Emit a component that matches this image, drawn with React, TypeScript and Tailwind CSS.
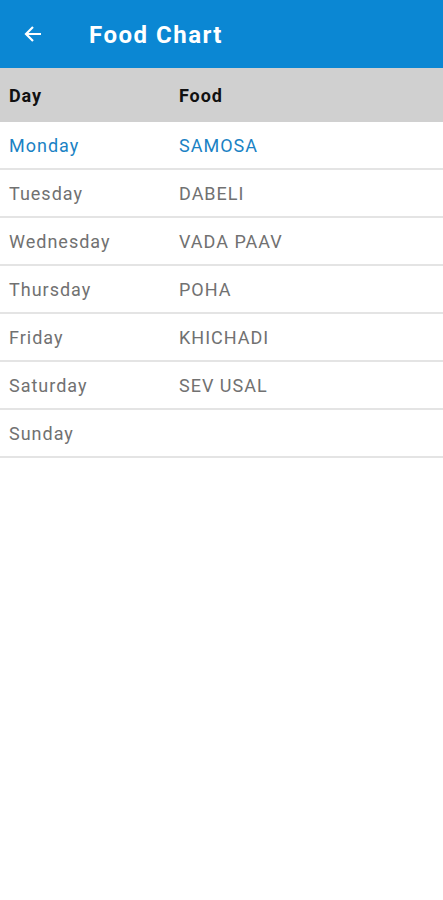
import React from 'react';

const rows = [
  { day: 'Monday', food: 'SAMOSA', active: true },
  { day: 'Tuesday', food: 'DABELI' },
  { day: 'Wednesday', food: 'VADA PAAV' },
  { day: 'Thursday', food: 'POHA' },
  { day: 'Friday', food: 'KHICHADI' },
  { day: 'Saturday', food: 'SEV USAL' },
  { day: 'Sunday', food: '' },
];

const App = () => {
  return (
    <div className="min-h-screen bg-white font-['Roboto',sans-serif]">
      <header className="h-[68px] bg-[#0b87d3] flex items-center text-white">
        <div className="w-[89px] pl-[21px] flex items-center">
          <svg width="24" height="24" viewBox="0 0 24 24" fill="none" stroke="currentColor" strokeWidth="2.2">
            <path d="M20 12H5M12 5l-7 7 7 7" />
          </svg>
        </div>
        <h1 className="text-[24px] font-bold tracking-[1.5px] pt-[2px]">Food Chart</h1>
      </header>

      <div className="h-[54px] bg-[#d0d0d0] flex items-center text-[18px] font-bold tracking-[0.9px] text-[#111]">
        <div className="w-[179px] pl-[9px]">Day</div>
        <div>Food</div>
      </div>

      <div>
        {rows.map((r) => (
          <div
            key={r.day}
            className={`h-[48px] flex items-center text-[18px] tracking-[1px] border-b-2 border-[#e4e4e4] ${
              r.active ? 'text-[#1a82c4]' : 'text-[#717171]'
            }`}
          >
            <div className="w-[179px] pl-[9px]">{r.day}</div>
            <div>{r.food}</div>
          </div>
        ))}
      </div>
    </div>
  );
};

export default App;
